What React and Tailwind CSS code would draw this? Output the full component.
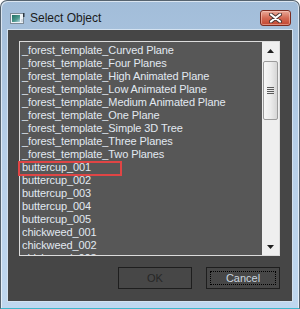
import React from "react";

const items = [
  "_forest_template_Curved Plane",
  "_forest_template_Four Planes",
  "_forest_template_High Animated Plane",
  "_forest_template_Low Animated Plane",
  "_forest_template_Medium Animated Plane",
  "_forest_template_One Plane",
  "_forest_template_Simple 3D Tree",
  "_forest_template_Three Planes",
  "_forest_template_Two Planes",
  "buttercup_001",
  "buttercup_002",
  "buttercup_003",
  "buttercup_004",
  "buttercup_005",
  "chickweed_001",
  "chickweed_002",
  "chickweed_003",
];

function WindowIcon() {
  return (
    <svg width="15" height="11" viewBox="0 0 15 11">
      <defs>
        <linearGradient id="icofill" x1="0" y1="0" x2="1" y2="1">
          <stop offset="0" stopColor="#1f6f63" />
          <stop offset="0.6" stopColor="#4f9a8f" />
          <stop offset="1" stopColor="#b9d7e4" />
        </linearGradient>
      </defs>
      <rect x="0.5" y="0.5" width="13" height="10" fill="#eef3f7" stroke="#7d8a96" />
      <rect x="2" y="2" width="8" height="7" fill="url(#icofill)" />
      <rect x="11" y="6" width="2" height="3" fill="#cfd9e2" />
      <rect x="13" y="0" width="1.5" height="4" fill="#2c3640" />
    </svg>
  );
}

function CloseGlyph() {
  return (
    <svg width="13" height="10" viewBox="0 0 13 10">
      <path d="M2 1.5 L11 8.5 M11 1.5 L2 8.5" stroke="#4a3330" strokeWidth="4" strokeLinecap="round" />
      <path d="M2 1.5 L11 8.5 M11 1.5 L2 8.5" stroke="#ffffff" strokeWidth="2.2" strokeLinecap="round" />
    </svg>
  );
}

function Arrow({ down = false }) {
  return (
    <svg width="7" height="4" viewBox="0 0 7 4">
      <path d={down ? "M0 0 L7 0 L3.5 4 Z" : "M0 4 L7 4 L3.5 0 Z"} fill="#202020" />
    </svg>
  );
}

function ScrollBar() {
  return (
    <div className="flex w-[17px] flex-col bg-[#efefef]">
      <div className="flex h-[17px] items-center justify-center">
        <Arrow />
      </div>
      <div className="mx-[1px] mt-[2px] flex h-[59px] flex-col items-center justify-center gap-[1px] rounded-[2px] border border-[#9b9b9b] bg-gradient-to-r from-[#f7f7f7] via-[#ececec] to-[#d6d6d6]">
        <div className="h-[1px] w-[7px] bg-[#5a5a5a]" />
        <div className="h-[1px] w-[7px] bg-[#5a5a5a]" />
        <div className="h-[1px] w-[7px] bg-[#5a5a5a]" />
        <div className="h-[1px] w-[7px] bg-[#5a5a5a]" />
      </div>
      <div className="flex-1" />
      <div className="flex h-[17px] items-center justify-center">
        <Arrow down />
      </div>
    </div>
  );
}

export default function App() {
  return (
    <div className="h-[309px] w-[300px] bg-white font-['Liberation_Sans',Arial,sans-serif]">
      <div className="flex h-full flex-col rounded-t-[7px] border border-[#56636f] border-b-[#3fb6cc] bg-gradient-to-b from-[#a2bdd9] via-[#b7cfe8] to-[#bfd7ef] shadow-[inset_1px_1px_0_rgba(255,255,255,0.6),inset_-1px_0_0_rgba(255,255,255,0.6)]">
        <div className="flex h-[28px] items-center pl-[9px] pr-[8px] pt-[6px]">
          <WindowIcon />
          <span className="ml-[5px] text-[12px] text-[#1b1b1b]">Select Object</span>
          <div className="flex-1" />
          <button
            type="button"
            className="flex h-[16px] w-[31px] items-center justify-center rounded-[3px] border border-[#7b2d22] bg-gradient-to-b from-[#e9a999] via-[#d36a55] to-[#c3452f] shadow-[inset_0_0_0_1px_rgba(255,220,210,0.45)]"
          >
            <CloseGlyph />
          </button>
        </div>

        <div className="mx-[6px] mb-[6px] flex-1 border border-[#d4e2f0]">
          <div className="flex h-full flex-col bg-[#464646] pl-[11px] pt-[11px]">
            <div className="relative w-[261px]">
              <div className="flex h-[215px] border border-[#dcdcdc] bg-[#575757]">
                <div className="flex-1 overflow-hidden pt-[2px] pl-[2px]">
                  {items.map((name) => (
                    <div key={name} className="h-[13px] whitespace-nowrap text-[11px] leading-[13px] tracking-[-0.1px] text-[#e2e9f1]">
                      {name}
                    </div>
                  ))}
                </div>
                <ScrollBar />
              </div>
              <div className="absolute left-[-1px] top-[120px] h-[15px] w-[104px] border-2 border-[#e04545]" />
            </div>

            <div className="mt-[11px] flex w-[261px] justify-end gap-[14px]">
              <button
                type="button"
                className="h-[22px] w-[74px] border border-[#1e1e1e] bg-[#474747] text-[11px] text-[#262626]"
              >
                OK
              </button>
              <button
                type="button"
                className="relative h-[22px] w-[74px] border border-[#1e1e1e] bg-[#474747] text-[11px] text-[#c9d4df]"
              >
                Cancel
                <span className="absolute inset-[3px] border border-dotted border-black" />
              </button>
            </div>
          </div>
        </div>
      </div>
    </div>
  );
}
